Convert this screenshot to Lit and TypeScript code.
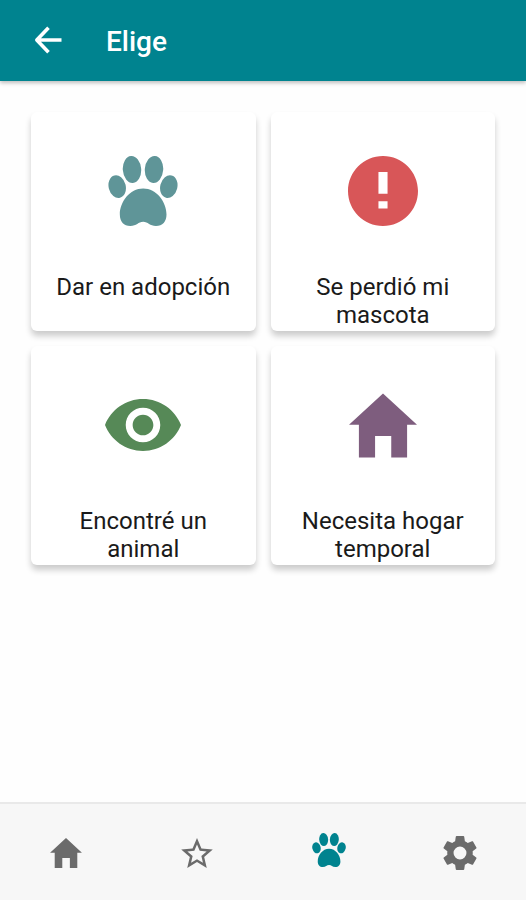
import { LitElement, html, css, svg } from "lit";
import { customElement, property } from "lit/decorators.js";

const icons = {
  back: {
    box: "0 0 28 28",
    body: svg`<path d="M27.500 14H3M14.500 1.800L2.800 14 14.500 26.200" fill="none" stroke="currentColor" stroke-width="3.600" stroke-linejoin="round"/>`,
  },
  paw: {
    box: "30 28 213 213",
    body: svg`
      <ellipse cx="58" cy="121" rx="26" ry="35" transform="rotate(-14 58 121)"/>
      <ellipse cx="103" cy="69" rx="28" ry="41" transform="rotate(-4 103 69)"/>
      <ellipse cx="170" cy="69" rx="28" ry="41" transform="rotate(4 170 69)"/>
      <ellipse cx="215" cy="121" rx="26" ry="35" transform="rotate(14 215 121)"/>
      <path d="M137 127C96 127 66 168 66 206C66 228 78 241 98 241C117 241 122 228 137 228C152 228 157 241 176 241C196 241 208 228 208 206C208 168 178 127 137 127Z"/>`,
  },
  alert: {
    box: "2 2 20 20",
    body: svg`<path d="M12 2C6.480 2 2 6.480 2 12s4.480 10 10 10 10-4.480 10-10S17.520 2 12 2zm1.300 15h-2.600v-2.100h2.600V17zm0-4.200h-2.600V6.600h2.600v6.200z"/>`,
  },
  eye: {
    box: "1 4.500 22 15",
    body: svg`<path d="M12 4.500C7 4.500 2.730 7.610 1 12c1.730 4.390 6 7.500 11 7.500s9.270-3.110 11-7.500c-1.730-4.390-6-7.500-11-7.500zM12 17c-2.760 0-5-2.240-5-5s2.240-5 5-5 5 2.240 5 5-2.240 5-5 5zm0-8c-1.660 0-3 1.340-3 3s1.340 3 3 3 3-1.340 3-3-1.340-3-3-3z"/>`,
  },
  house: {
    box: "0 0 206 194",
    body: svg`<path d="M103 0L206 95H176V194H128V129H79V194H30V95H0Z"/>`,
  },
  star: {
    box: "2 2 20 19",
    body: svg`<path d="M22 9.240l-7.190-.620L12 2 9.190 8.630 2 9.240l5.460 4.730L5.820 21 12 17.270 18.180 21l-1.630-7.030L22 9.240zM12 15.400l-3.760 2.270 1-4.280-3.320-2.880 4.380-.380L12 6.100l1.710 4.040 4.380.380-3.320 2.880 1 4.280L12 15.400z"/>`,
  },
  gear: {
    box: "2 2 20 20",
    body: svg`<path d="M19.430 12.980c.040-.320.070-.640.070-.980s-.030-.660-.070-.980l2.110-1.650c.190-.150.240-.420.120-.640l-2-3.460c-.120-.220-.390-.300-.610-.220l-2.490 1c-.520-.400-1.080-.730-1.690-.980l-.380-2.650C14.460 2.180 14.250 2 14 2h-4c-.250 0-.460.180-.490.420l-.380 2.650c-.610.250-1.170.590-1.690.980l-2.490-1c-.230-.090-.490 0-.610.220l-2 3.460c-.130.220-.070.490.120.640l2.110 1.650c-.040.320-.070.650-.070.980s.030.660.070.980l-2.110 1.650c-.190.150-.240.420-.120.640l2 3.460c.120.220.390.300.610.220l2.490-1c.520.400 1.080.730 1.690.980l.380 2.650c.030.240.240.420.490.420h4c.250 0 .460-.180.490-.420l.380-2.650c.610-.250 1.170-.590 1.690-.980l2.490 1c.230.090.490 0 .610-.220l2-3.460c.120-.220.070-.490-.120-.640l-2.110-1.650zM12 15.800a3.800 3.800 0 1 1 0-7.600 3.800 3.800 0 0 1 0 7.600z"/>`,
  },
};

type IconName = keyof typeof icons;

@customElement("app-icon")
class AppIcon extends LitElement {
  @property() name: IconName = "paw";

  static styles = css`
    :host {
      display: block;
    }
    .glyph {
      display: block;
      width: 100%;
      height: 100%;
      fill: currentColor;
    }
  `;

  render() {
    const icon = icons[this.name];
    return html`<svg class="glyph" viewBox=${icon.box} aria-hidden="true">${icon.body}</svg>`;
  }
}

const choices: { icon: IconName; label: string }[] = [
  { icon: "paw", label: "Dar en adopción" },
  { icon: "alert", label: "Se perdió mi mascota" },
  { icon: "eye", label: "Encontré un animal" },
  { icon: "house", label: "Necesita hogar temporal" },
];

const tabs: { icon: IconName; label: string; active?: boolean }[] = [
  { icon: "house", label: "Inicio" },
  { icon: "star", label: "Favoritos" },
  { icon: "paw", label: "Mascotas", active: true },
  { icon: "gear", label: "Ajustes" },
];

@customElement("app-root")
class AppRoot extends LitElement {
  static styles = css`
    :host {
      display: flex;
      flex-direction: column;
      min-height: 100vh;
      background: #fefefe;
      color: #1a1a1a;
      font-family: Roboto, "Liberation Sans", sans-serif;
    }
    * {
      box-sizing: border-box;
    }
    button {
      border: 0;
      background: none;
      color: inherit;
      font: inherit;
      cursor: pointer;
    }
    .bar {
      display: flex;
      align-items: center;
      gap: 30px;
      padding: 20px 20px 17px;
      background: #00838f;
      color: #fff;
      box-shadow: 0 2px 4px rgba(0, 0, 0, 0.26);
    }
    .back {
      padding: 4px 14px 8px;
    }
    .back-icon {
      width: 28px;
      height: 28px;
    }
    .title {
      margin: 0;
      font-size: 28px;
      line-height: 44px;
      font-weight: 500;
    }
    .content {
      flex: 1;
      padding: 31px 31px 24px;
    }
    .grid {
      display: grid;
      grid-template-columns: 1fr 1fr;
      gap: 15px;
    }
    .card {
      display: flex;
      flex-direction: column;
      align-items: center;
      justify-content: flex-start;
      gap: 40px;
      min-height: 219px;
      padding: 37px 24px 2px;
      border-radius: 6px;
      background: #fff;
      box-shadow: 0 5px 6px rgba(0, 0, 0, 0.2);
    }
    .picture {
      display: flex;
      align-items: center;
      justify-content: center;
      height: 84px;
    }
    .label {
      font-size: 24px;
      line-height: 28px;
      text-align: center;
    }
    .card-icon {
      width: 70px;
      height: 70px;
    }
    .paw {
      color: #5f9598;
    }
    .alert {
      color: #d85658;
    }
    .eye {
      width: 76px;
      height: 52px;
      color: #568957;
    }
    .house {
      width: 68px;
      height: 65px;
      color: #7e5d7e;
    }
    .tabs {
      display: grid;
      grid-template-columns: repeat(4, 1fr);
      border-top: 2px solid #e9e9e9;
      background: #f7f7f7;
    }
    .tab {
      display: flex;
      align-items: center;
      justify-content: center;
      height: 96px;
      padding: 2px 0 0;
      color: #6b6b6b;
    }
    .tab.active {
      padding: 0 0 4px;
      color: #00838f;
    }
    .tab-icon {
      width: 34px;
      height: 34px;
    }
    .tab-icon.small {
      width: 32px;
      height: 30px;
    }
  `;

  render() {
    return html`
      <header class="bar">
        <button class="back" aria-label="Volver">
          <app-icon class="back-icon" name="back"></app-icon>
        </button>
        <h1 class="title">Elige</h1>
      </header>
      <main class="content">
        <div class="grid">
          ${choices.map(
            (c) => html`
              <button class="card">
                <span class="picture">
                  <app-icon class="card-icon ${c.icon}" name=${c.icon}></app-icon>
                </span>
                <span class="label">${c.label}</span>
              </button>
            `
          )}
        </div>
      </main>
      <nav class="tabs">
        ${tabs.map(
          (t) => html`
            <button class="tab ${t.active ? "active" : ""}" aria-label=${t.label}>
              <app-icon
                class="tab-icon ${t.icon === "house" || t.icon === "star" ? "small" : ""}"
                name=${t.icon}
              ></app-icon>
            </button>
          `
        )}
      </nav>
    `;
  }
}
